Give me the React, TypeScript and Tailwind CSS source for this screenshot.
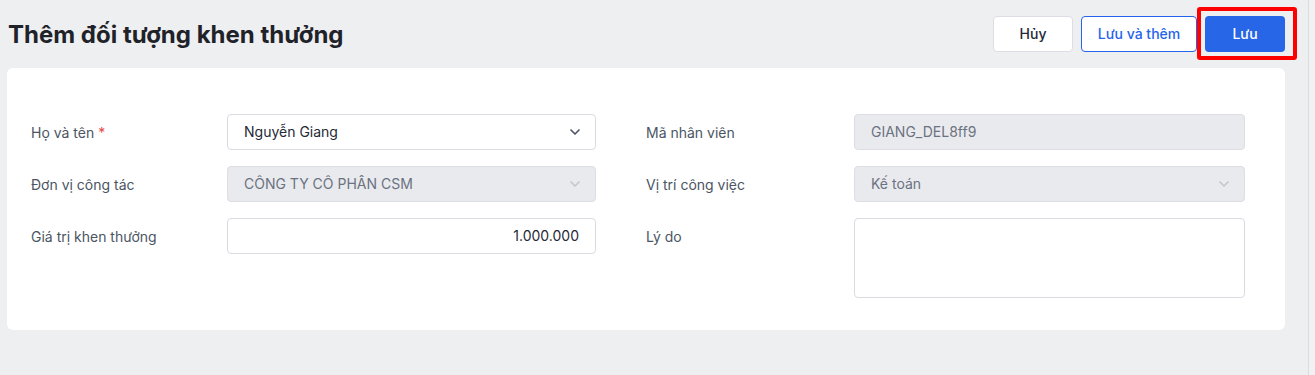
import { ChevronDown } from "lucide-react";

const font = { fontFamily: "Inter, 'Noto Sans', sans-serif" };

function Label({ text, required }: { text: string; required?: boolean }) {
  return (
    <div className="h-9 flex items-center pt-px text-sm text-[#4b5563]">
      {text}
      {required && <span className="text-[#e5484d] ml-1">*</span>}
    </div>
  );
}

function Select({ value, disabled }: { value: string; disabled?: boolean }) {
  return (
    <div
      className={`h-9 rounded border flex items-center justify-between pl-4 pr-3 text-sm ${
        disabled
          ? "bg-[#e9eaee] border-[#dcdee3] text-[#6b7280]"
          : "bg-white border-[#d9dbe0] text-[#1f2937]"
      }`}
    >
      <span>{value}</span>
      <ChevronDown
        size={16}
        strokeWidth={2.5}
        className={disabled ? "text-[#c4c7cd]" : "text-[#4b5563]"}
      />
    </div>
  );
}

export default function App() {
  return (
    <div className="w-[1315px] h-[375px] bg-[#eeeff1] flex" style={font}>
      <div className="w-[1308px] flex flex-col">
        <div className="flex items-center justify-between pl-2 pr-[23px] pt-4 h-[68px] pb-4">
          <h1 className="text-[24px] font-bold text-[#1f2329] pt-px">
            Thêm đối tượng khen thưởng
          </h1>
          <div className="flex items-center gap-2">
            <button className="w-[80px] h-9 rounded bg-white border border-[#dcdee3] text-sm font-medium text-[#1f2937]">
              Hủy
            </button>
            <button className="w-[116px] h-9 rounded bg-white border border-[#2563eb] text-sm font-medium text-[#2563eb]">
              Lưu và thêm
            </button>
            <div className="pl-1 pr-2 pt-[5px] pb-1 border-4 border-[#ff0000] rounded-[3px] -mt-[9px] -mb-[8px] -ml-[8px] -mr-[12px]">
              <button className="w-[80px] h-9 rounded bg-[#2766e6] text-sm font-medium text-white">
                Lưu
              </button>
            </div>
          </div>
        </div>
        <div className="ml-[7px] w-[1278px] h-[262px] bg-white rounded-md pt-[46px] pl-6 flex">
          <div className="w-[196px] flex flex-col gap-4">
            <Label text="Họ và tên" required />
            <Label text="Đơn vị công tác" />
            <Label text="Giá trị khen thưởng" />
          </div>
          <div className="w-[369px] flex flex-col gap-4">
            <Select value="Nguyễn Giang" />
            <Select value="CÔNG TY CÔ PHÂN CSM" disabled />
            <div className="h-9 rounded border border-[#d9dbe0] bg-white flex items-center justify-end px-4 text-sm text-[#1f2937]">
              1.000.000
            </div>
          </div>
          <div className="w-[208px] ml-[50px] flex flex-col gap-4">
            <Label text="Mã nhân viên" />
            <Label text="Vị trí công việc" />
            <Label text="Lý do" />
          </div>
          <div className="w-[391px] flex flex-col gap-4">
            <div className="h-9 rounded border border-[#dcdee3] bg-[#e9eaee] flex items-center px-4 text-sm text-[#6b7280]">
              GIANG_DEL8ff9
            </div>
            <Select value="Kế toán" disabled />
            <div className="h-20 rounded border border-[#d9dbe0] bg-white" />
          </div>
        </div>
      </div>
      <div className="flex-1 border-l border-[#dcdde0] bg-[#f1f1f3]" />
    </div>
  );
}
